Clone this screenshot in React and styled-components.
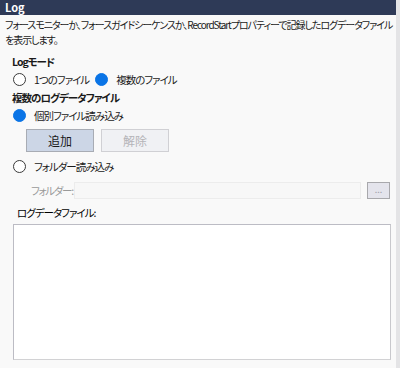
import React from "react";
import styled, { createGlobalStyle } from "styled-components";

const GlobalStyle = createGlobalStyle`
  html, body {
    margin: 0;
    padding: 0;
    background: #f9f9f9;
  }
  body {
    font-family: "Noto Sans CJK JP", "Noto Sans", sans-serif;
    font-feature-settings: "palt";
    font-size: 10.5px;
    letter-spacing: -1px;
    color: #1a1a1a;
  }
`

const Panel = styled.div`
  width: 400px;
  height: 368px;
  box-sizing: border-box;
  display: flex;
  flex-direction: column;
  background: #f9f9f9;
  border-right: 4px solid #e4e4e6;
  overflow: hidden;
`

const Header = styled.div`
  height: 15px;
  line-height: 15px;
  background: #2e3a57;
  color: #fff;
  font-weight: bold;
  font-size: 11px;
  letter-spacing: 0;
  padding-left: 5px;
`

const Description = styled.div`
  padding: 2px 0 0 5px;
  font-size: 10px;
  line-height: 15px;
  white-space: nowrap;
  letter-spacing: -1.05px;
`

const Body = styled.div`
  display: flex;
  flex-direction: column;
  padding: 0 6px 0 12px;
`

const SectionTitle = styled.div`
  font-weight: bold;
  line-height: 16px;
  margin-top: ${(p) => p.top || 0}px;
`

const RadioRow = styled.div`
  display: flex;
  align-items: center;
  height: 18px;
  margin-top: ${(p) => p.top || 0}px;
  padding-left: 1px;
`

const RadioItem = styled.label`
  display: flex;
  align-items: center;
  gap: 8px;
  margin-right: 6px;
  white-space: nowrap;
`

const Dot = styled.span`
  width: 13px;
  height: 13px;
  box-sizing: border-box;
  border-radius: 50%;
  background: ${(p) => (p.checked ? "#0a74e6" : "#fff")};
  border: 1px solid ${(p) => (p.checked ? "#0a74e6" : "#3a3a3a")};
`

const ButtonRow = styled.div`
  display: flex;
  gap: 7px;
  margin-top: 5px;
  padding-left: 14px;
`

const Button = styled.button`
  width: 68px;
  height: 23px;
  box-sizing: border-box;
  font-family: inherit;
  font-size: 12px;
  letter-spacing: 0;
  padding: 0;
  border: 1px solid ${(p) => (p.disabled ? "#d0d0d4" : "#a8acb4")};
  background: ${(p) => (p.disabled ? "#f0f1f4" : "#ccd6e6")};
  color: ${(p) => (p.disabled ? "#b4b4b8" : "#1a1a1a")};
`

const FolderRow = styled.div`
  display: flex;
  align-items: center;
  height: 17px;
  margin-top: 7px;
  padding-left: 19px;
`

const FolderLabel = styled.span`
  color: #9a9a9a;
  width: 43px;
  flex-shrink: 0;
  letter-spacing: -1.3px;
  white-space: nowrap;
`

const FolderInput = styled.div`
  width: 288px;
  height: 17px;
  box-sizing: border-box;
  border: 1px solid #ececec;
  background: #f7f7f7;
`

const BrowseButton = styled.div`
  width: 23px;
  height: 17px;
  margin-left: 6px;
  box-sizing: border-box;
  border: 1px solid #a8a8ac;
  background: #e4e4ec;
  color: #a0a0a8;
  font-size: 9px;
  letter-spacing: 0;
  line-height: 13px;
  text-align: center;
`

const FileLabel = styled.div`
  line-height: 16px;
  margin-top: 6px;
  padding-left: 5px;
  color: #000;
  white-space: nowrap;
`

const FileList = styled.div`
  width: 378px;
  height: 136px;
  box-sizing: border-box;
  margin-top: 3px;
  margin-left: 1px;
  background: #fff;
  border: 1px solid #bcbcc4;
  border-right-color: #c8c8cc;
  border-bottom-color: #d2d2d4;
`

const Radio = ({ checked, label }) => (
  <RadioItem>
    <Dot checked={checked} />
    <span>{label}</span>
  </RadioItem>
)

export default function App() {
  return (
    <Panel>
      <GlobalStyle />
      <Header>Log</Header>
      <Description>
        フォースモニターか、フォースガイドシーケンスか、RecordStartプロパティーで記録したログデータファイル
        <br />
        を表示します。
      </Description>
      <Body>
        <SectionTitle top={7}>Logモード</SectionTitle>
        <RadioRow>
          <Radio label="1つのファイル" />
          <Radio checked label="複数のファイル" />
        </RadioRow>
        <SectionTitle top={2}>複数のログデータファイル</SectionTitle>
        <RadioRow>
          <Radio checked label="個別ファイル読み込み" />
        </RadioRow>
        <ButtonRow>
          <Button>追加</Button>
          <Button disabled>解除</Button>
        </ButtonRow>
        <RadioRow top={5}>
          <Radio label="フォルダー読み込み" />
        </RadioRow>
        <FolderRow>
          <FolderLabel>フォルダー:</FolderLabel>
          <FolderInput />
          <BrowseButton>...</BrowseButton>
        </FolderRow>
        <FileLabel>ログデータファイル:</FileLabel>
        <FileList />
      </Body>
    </Panel>
  );
}
